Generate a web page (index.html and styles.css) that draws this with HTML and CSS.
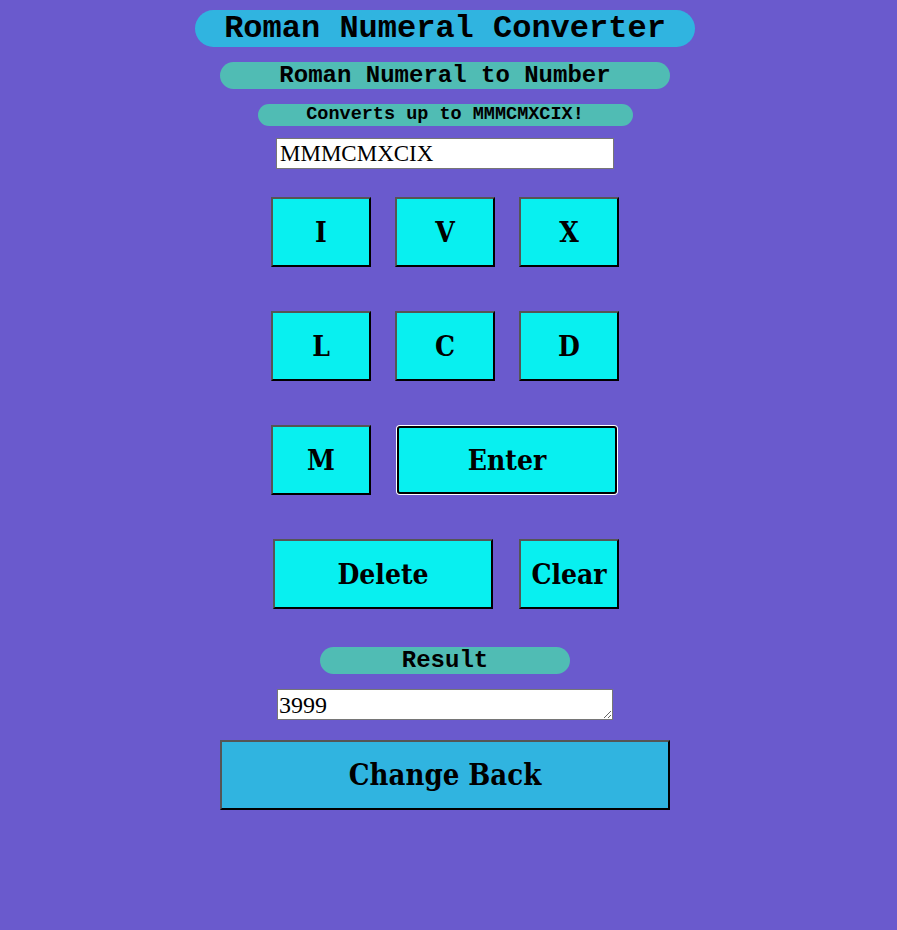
FILE: index.html
```html
<!DOCTYPE html>
<html lang="en">
<head>
<meta charset="utf-8">
<title>Roman Numeral Converter</title>
<link rel="stylesheet" href="styles.css">
</head>
<body>
<main class="app">
  <h1 class="title pill">Roman Numeral Converter</h1>
  <h2 class="subtitle pill">Roman Numeral to Number</h2>
  <p class="note pill">Converts up to MMMCMXCIX!</p>
  <input class="entry" type="text" value="MMMCMXCIX">
  <div class="pad">
    <div class="row">
      <button class="key">I</button>
      <button class="key">V</button>
      <button class="key">X</button>
    </div>
    <div class="row">
      <button class="key">L</button>
      <button class="key">C</button>
      <button class="key">D</button>
    </div>
    <div class="row row-wide row-left">
      <button class="key">M</button>
      <button class="key key-wide key-focus">Enter</button>
    </div>
    <div class="row row-wide row-right">
      <button class="key key-wide">Delete</button>
      <button class="key">Clear</button>
    </div>
  </div>
  <h3 class="result-label pill">Result</h3>
  <textarea class="result">3999</textarea>
  <button class="change">Change Back</button>
</main>
</body>
</html>
```
FILE: styles.css
```css
html, body {
  margin: 0;
  padding: 0;
  background: #6a5acd;
}

.app {
  width: 890px;
  display: flex;
  flex-direction: column;
  align-items: center;
  padding-top: 10px;
}

.pill {
  margin: 0;
  color: #000;
  font-family: "Liberation Mono", "Courier New", monospace;
  font-weight: bold;
  text-align: center;
  box-sizing: border-box;
}

.title {
  width: 500px;
  height: 37px;
  line-height: 37px;
  border-radius: 19px;
  background: #30b4e0;
  font-size: 32px;
}

.subtitle {
  width: 450px;
  height: 27px;
  line-height: 27px;
  border-radius: 14px;
  background: #50bcb4;
  font-size: 24px;
  margin-top: 15px;
}

.note {
  width: 375px;
  height: 22px;
  line-height: 22px;
  border-radius: 11px;
  background: #50bcb4;
  font-size: 18.5px;
  margin-top: 15px;
}

.entry {
  margin-top: 12px;
  width: 338px;
  height: 31px;
  box-sizing: border-box;
  border: 1px solid #767676;
  padding: 2px 3px;
  background: #fff;
  font-family: "Liberation Serif", "Times New Roman", serif;
  font-size: 23px;
  color: #000;
}

.pad {
  margin-top: 28px;
  display: flex;
  flex-direction: column;
  gap: 44px;
}

.row {
  display: flex;
  justify-content: center;
  gap: 24px;
}

.row-wide {
  gap: 26px;
}

.row-left {
  padding-right: 2px;
}

.row-right {
  padding-left: 2px;
}

.key {
  width: 100px;
  height: 70px;
  box-sizing: border-box;
  margin: 0;
  padding: 0;
  background: #08f0f0;
  border: 2px solid;
  border-color: #555 #000 #000 #555;
  color: #000;
  font-family: "DejaVu Serif Condensed", "DejaVu Serif", serif;
  font-weight: bold;
  font-size: 28px;
}

.key-wide {
  width: 220px;
}

.key-focus {
  height: 68px;
  margin: 1px 0;
  border-color: #000;
  border-radius: 3px;
  box-shadow: 0 0 0 1px #fff;
}

.result-label {
  width: 250px;
  height: 27px;
  line-height: 27px;
  border-radius: 14px;
  background: #50bcb4;
  font-size: 24px;
  margin-top: 38px;
}

.result {
  margin-top: 15px;
  width: 336px;
  height: 31px;
  box-sizing: border-box;
  border: 1px solid #767676;
  padding: 0 1px;
  background: #fff;
  font-family: "Liberation Serif", "Times New Roman", serif;
  font-size: 24px;
  line-height: 30px;
  color: #000;
  overflow: hidden;
}

.change {
  margin-top: 20px;
  width: 450px;
  height: 70px;
  box-sizing: border-box;
  padding: 0;
  background: #30b4e0;
  border: 2px solid;
  border-color: #555 #000 #000 #555;
  color: #000;
  font-family: "DejaVu Serif Condensed", "DejaVu Serif", serif;
  font-weight: bold;
  font-size: 29px;
}
```
